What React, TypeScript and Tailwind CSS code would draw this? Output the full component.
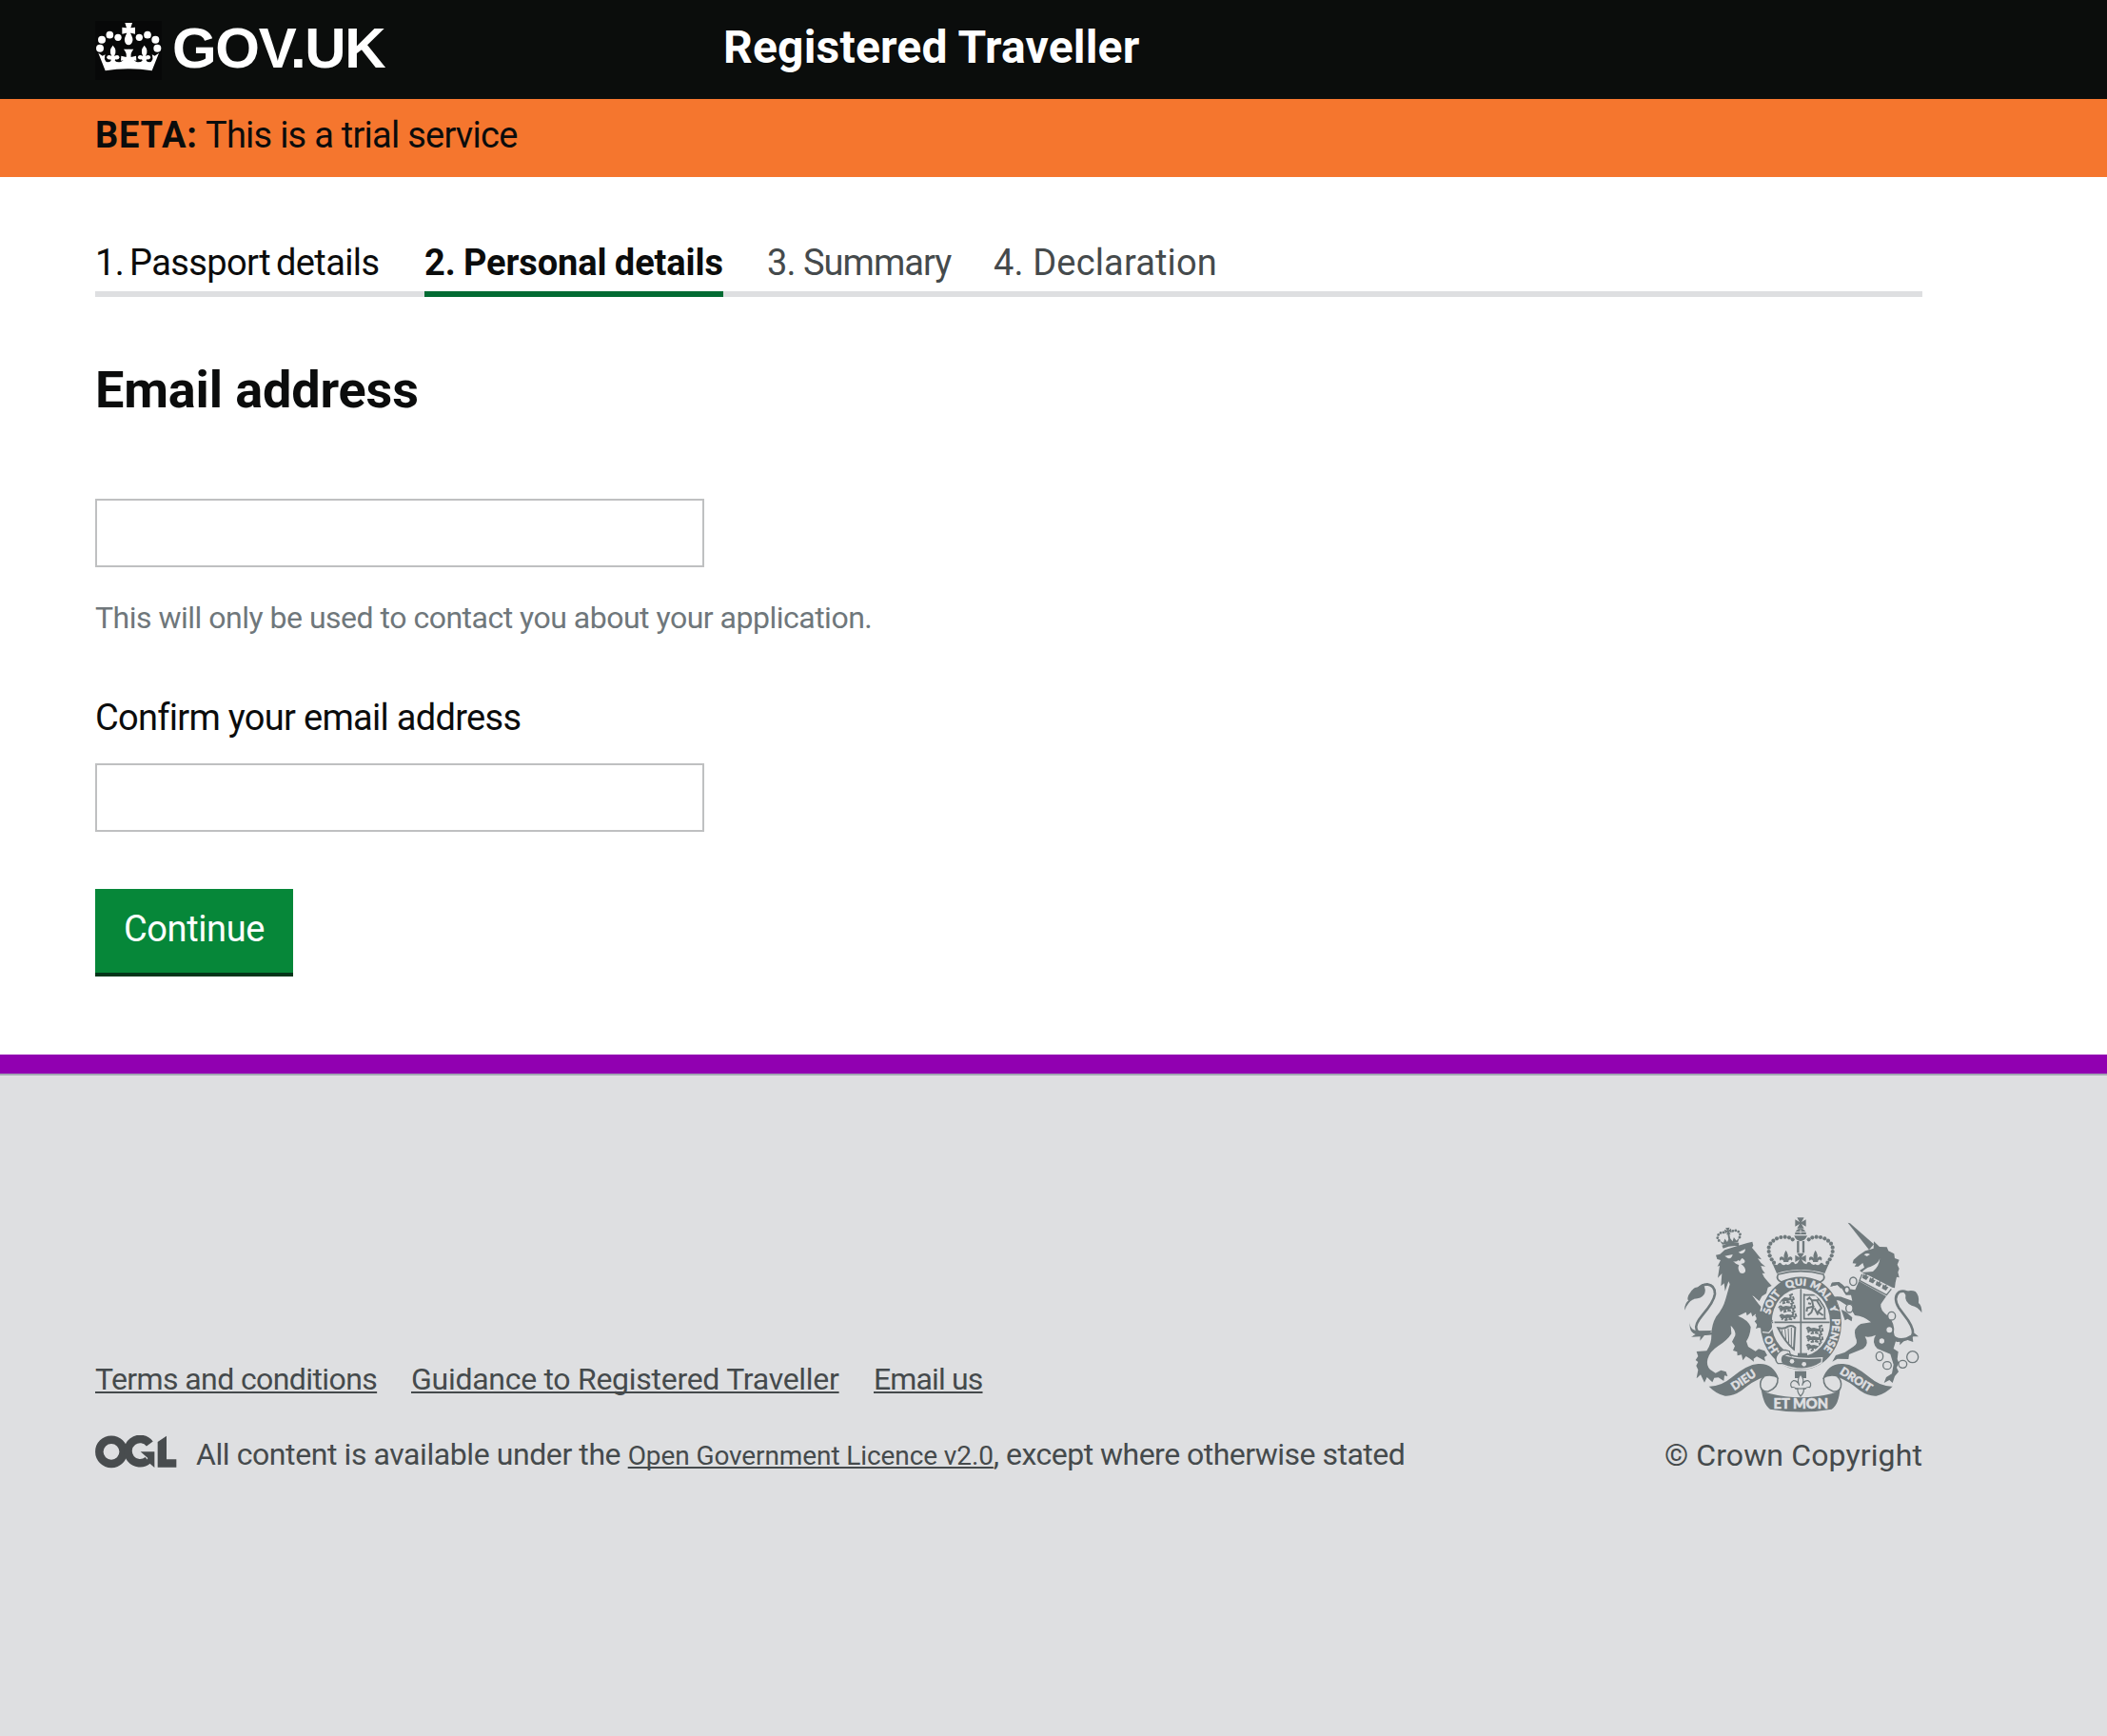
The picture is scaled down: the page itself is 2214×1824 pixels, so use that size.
import type { ReactNode } from "react";

const INK = "#6f797c";
const PAPER = "#dedfe1";

function HeaderCrown() {
  const half = (
    <>
      <circle cx="75" cy="152" r="12" />
      <circle cx="81" cy="125" r="12" />
      <circle cx="106" cy="110" r="11.5" />
      <circle cx="132" cy="118" r="11" />
      <path d="M70 167 L83 176 L92 172 Q86 186 95 195 Q105 197 110 191 L109 187 Q99 190 96 181 Q99 171 108 175 L112 177 Q101 160 116 143 Q131 160 120 177 L125 175 Q134 171 137 181 Q134 190 124 187 L122 191 Q129 198 141 195 L149 190 L141 191 L142 176 L158 180 Q160 166 150 155 H166 V217 Q126 217 92 223 Z" />
    </>
  );
  return (
    <svg className="h-[62px] w-[70px] bg-[#070808]" viewBox="60 66 210 186" fill="#fff">
      {half}
      <g transform="translate(331 0) scale(-1 1)">{half}</g>
      <path d="M154 72 H177 L172 88 H173 L186 86 V107 L173 104 H171 Q180 120 178 129 Q174 142 165.500 142 Q156 142 153 129 Q151 120 160 104 H158 L145 107 V86 L158 88 H159 Z" />
    </svg>
  );
}

function OglLogo() {
  return (
    <svg className="h-[35px] w-[86px]" viewBox="60 322 258 105">
      <circle cx="111" cy="374" r="38" fill="none" stroke="#484c4e" strokeWidth="25.500" />
      <path d="M232 349 A38 38 0 1 0 226 401" fill="none" stroke="#484c4e" strokeWidth="25.500" />
      <path d="M203 374 H247 V424 L222 402 L226 394 Z M257 343 L285 324 V398 H316 V423 H257 Z" fill="#484c4e" />
    </svg>
  );
}

function Fleur({ x, y }: { x: number; y: number }) {
  return (
    <g transform={`translate(${x} ${y})`}>
      <path d="M0 -24 Q11 -8 4 6 Q7 -4 15 -4 Q24 0 18 9 Q15 4 11 6 Q6 9 8 13 H-8 Q-6 9 -11 6 Q-15 4 -18 9 Q-24 0 -15 -4 Q-7 -4 -4 6 Q-11 -8 0 -24 Z" />
    </g>
  );
}

function Pattee({ x, y, s = 1 }: { x: number; y: number; s?: number }) {
  return (
    <path
      transform={`translate(${x} ${y}) scale(${s})`}
      d="M-11 -17 H11 L3 -3 L17 -11 V11 L3 3 L11 17 H-11 L-3 3 L-17 11 V-11 L-3 -3 Z"
    />
  );
}

const beads: [number, number][] = [
  [461, 128], [450, 122], [437, 120], [424, 121], [411, 125], [400, 132],
  [391, 141], [386, 153], [386, 166], [389, 179], [395, 191], [402, 201],
];

function CentreCrown() {
  const half = (
    <>
      {beads.map(([x, y]) => <circle key={`${x}-${y}`} cx={x} cy={y} r="6.200" />)}
      <Fleur x={440} y={186} />
      <path d="M398 205 L412 209 Q420 196 426 205 Q432 212 440 206 Q450 212 457 200 Q466 196 468 206 L487 200 V224 Q448 222 411 235 Z" />
    </>
  );
  return (
    <g>
      {half}
      <g transform="translate(973 0) scale(-1 1)">{half}</g>
      <Pattee x={486} y={76} />
      <path d="M468 112 Q470 94 486 93 Q502 94 504 112 Z" />
      <path d="M466 116 H507 Q500 133 486 133 Q472 133 466 116 Z" />
      <path d="M478 133 V170 M495 133 V170" stroke={INK} strokeWidth="7" />
      <Pattee x={486} y={188} />
      <path d="M486 96 V110 M470 104 H502" stroke={PAPER} strokeWidth="2.500" />
      <path d="M415 238 Q486 218 558 238 Q566 254 548 262 Q486 234 425 262 Q407 254 415 238 Z" fill={PAPER} stroke={INK} strokeWidth="5" />
    </g>
  );
}

function Lion() {
  return (
    <g>
      <g transform="rotate(-9 262 130)">
        <path d="M236 143 Q262 134 290 143 L288 153 Q262 145 238 153 Z" />
        <path d="M232 128 L238 141 H287 L293 128 L283 135 L277 123 L271 135 L263 121 L254 135 L248 123 L242 135 Z" />
        {[[229, 126], [226, 117], [230, 108], [238, 103], [247, 103], [277, 103], [286, 103], [294, 108], [298, 117], [295, 126]].map(([x, y]) => (
          <circle key={x} cx={x} cy={y} r="4.300" />
        ))}
        <Pattee x={262} y={101} s={0.62} />
        <path d="M259 105 H265 V126 H259 Z" />
      </g>
      <path d="M219 177 L232 174 L247 161 Q285 148 318 139 L334 135 L337 147 L333 154 Q345 168 363 191 L351 188 Q360 204 375 213 L361 211 Q364 225 374 235 L365 234 Q370 248 382 260 L395 274 L383 279 L378 298 L364 307 L356 322 L336 306 Q352 332 369 347 L386 361 L393 377 L399 384 L390 391 L393 405 L384 404 L382 418 L371 409 L366 414 L356 405 L345 409 L349 396 L341 386 L351 377 L343 369 L346 362 L334 371 L330 358 L317 368 L314 357 L289 369 Q322 382 329 404 Q327 432 315 449 L321 466 L344 480 L354 473 L373 479 L381 493 L372 499 L375 512 L358 502 L348 497 L338 504 L339 513 L324 502 L314 496 L304 509 L300 491 L287 494 L286 482 L273 478 L279 464 L270 450 L280 431 Q283 415 266 399 L268 425 Q255 446 226 464 Q199 482 193 505 Q188 525 201 538 L218 549 L235 540 L251 545 L256 559 L246 557 L244 574 L227 563 L214 564 L208 578 L191 562 L183 579 L171 554 L158 566 L163 539 L157 526 L163 514 L155 508 L163 496 L158 481 L190 479 Q206 455 205 429 Q205 397 220 371 Q242 345 250 315 L263 269 L259 260 L248 291 L245 266 L235 275 L238 235 L225 249 L231 210 L224 213 L234 193 L223 190 Z" />
      <path d="M208 424 Q166 432 158 412 Q151 397 177 366 Q213 324 216 300 Q217 272 192 269 Q173 270 160 287" fill="none" stroke={INK} strokeWidth="8" />
      <path d="M121 351 Q119 332 133 320 Q127 318 133 303 Q145 279 163 278 L177 268 Q191 283 182 301 Q173 315 151 315 Q130 325 121 351 Z" />
      <path d="M138 386 Q134 409 157 416 L208 415 Q193 428 183 430 L169 447 L170 434 L141 435 L155 427 Q132 419 138 386 Z" />
      <g fill={PAPER}>
        <path d="M247 180 L272 175 Q269 190 257 187 Z M290 168 L312 158 Q312 172 298 173 Z" />
        <path d="M273 196 Q283 201 290 192 Q300 183 307 191 Q314 197 307 203 L298 205 Q314 216 312 229 Q307 238 295 233 Q286 219 292 209 L282 204 Z" />
        <path d="M284 190 L294 183 L301 187 L294 196 Z" fill={INK} />
      </g>
      <path d="M336 306 L376 349" stroke={PAPER} strokeWidth="3" />
    </g>
  );
}

function Unicorn() {
  return (
    <g>
      <path d="M635 75 L642 77 L717 143 L702 161 Z" />
      <path d="M653 192 L670 177 L690 164 L716 156 L717 134 L735 151 L758 152 L763 164 L781 173 L783 187 L797 192 L791 207 L797 220 L793 231 L797 248 L789 246 L785 264 L783 281 L775 279 L700 241 Q685 238 672 226 L687 216 L682 202 L668 213 L656 213 L662 204 L650 203 Z" />
      <path d="M714 229 Q734 213 736 188 Q731 205 706 214 Q690 218 679 232 Z" fill={PAPER} />
      <path d="M686 176 Q696 169 705 175 L695 181 Z" fill={PAPER} />
      <path d="M680 237 L672 257 L757 303 L772 284" fill={PAPER} stroke={INK} strokeWidth="4" />
      {[[690, 246], [711, 257], [732, 268], [752, 279]].map(([x, y]) => (
        <g key={x} transform={`translate(${x} ${y}) rotate(27) scale(.8)`}>
          <path d="M0 -14 L5 -5 L12 -8 L9 9 H-9 L-12 -8 L-5 -5 Z" />
        </g>
      ))}
      <path d="M670 259 L756 307 L739 332 Q735 351 764 371 Q784 394 780 421 L786 449 L779 472 L794 482 L791 505 L796 517 L789 532 L795 545 L783 559 L776 580 L766 571 L749 580 L756 562 L774 551 L779 522 L769 489 L728 472 Q708 451 723 429 Q704 438 689 434 Q704 458 684 472 L639 490 L637 505 L602 504 L586 513 L597 493 L625 484 L652 466 Q670 456 659 436 Q650 407 676 394 L708 389 Q687 370 657 367 L642 342 L607 320 L594 320 L610 347 L629 356 L649 374 L647 386 L634 378 L626 383 L618 360 L596 341 L581 316 L589 308 L615 309 L649 321 L645 303 L629 303 L615 281 L602 271 L580 276 L585 264 L607 262 L634 283 L658 287 Z" />
      <path d="M788 447 Q823 447 838 431 Q846 416 825 383 L795 342 Q777 310 796 294 Q814 285 832 302" fill="none" stroke={INK} strokeWidth="8" />
      <path d="M812 294 Q833 285 848 292 Q861 304 858 328 Q869 337 868 359 Q856 340 836 336 Q813 324 817 303 Z" />
      <path d="M776 425 Q789 445 819 437 L845 423 L858 434 L839 434 L841 451 L817 443 L799 461 L799 447 L776 451 Z" />
      <g fill={PAPER} stroke={INK} strokeWidth="4">
        <ellipse cx="652" cy="260" rx="11" ry="13" />
        <ellipse cx="632" cy="287" rx="8" ry="10" />
        <ellipse cx="640" cy="345" rx="11" ry="13" />
        <ellipse cx="773" cy="369" rx="12" ry="13" />
        <circle cx="766" cy="413" r="11" />
        <circle cx="742" cy="448" r="10" />
        <ellipse cx="735" cy="496" rx="11" ry="14" />
        <ellipse cx="759" cy="525" rx="13" ry="12" />
        <ellipse cx="808" cy="521" rx="13" ry="12" />
        <circle cx="839" cy="498" r="18" />
      </g>
    </g>
  );
}

function QuarterLions({ x, y }: { x: number; y: number }) {
  return (
    <g fill="none" stroke={INK} strokeWidth="6">
      {[0, 27, 54].map((dy) => (
        <path
          key={dy}
          transform={`translate(${x} ${y + dy})`}
          d="M0 4 Q6 -5 11 3 Q7 9 2 6 M10 5 L23 3 L37 7 Q45 3 41 -4 L50 -7 M11 7 L4 15 M18 6 L20 17 L13 18 M33 7 L29 16 L37 18 M39 8 L46 12 L43 18 M49 1 L51 12 M8 9 H38"
        />
      ))}
    </g>
  );
}

function Garter() {
  const words: [string, number][] = [["HO", 107], ["SOIT", 234], ["QUI", 327], ["MAL", 404], ["Y", 470], ["PENSE", 550]];
  return (
    <g>
      <ellipse cx="487" cy="391" rx="133" ry="153" fill={PAPER} />
      <ellipse cx="487" cy="391" rx="128" ry="148" />
      <ellipse cx="487" cy="389" rx="92" ry="107" fill={PAPER} />
      <clipPath id="shield"><ellipse cx="487" cy="389" rx="86" ry="101" /></clipPath>
      <g clipPath="url(#shield)">
        <g transform="rotate(-8 440 340)"><QuarterLions x={417} y={310} /></g>
        <QuarterLions x={505} y={406} />
        <path d="M497 299 V378 H566 M497 303 H535 L562 344 V378" fill="none" stroke={INK} strokeWidth="5" />
        <path d="M506 318 L514 311 L522 320 L537 320 L552 344 L541 356 L557 367 M522 320 L526 339 L507 344 L505 355 M528 337 L520 358 L509 367 M530 344 L541 366 M510 329 L519 331 M536 322 L545 315" fill="none" stroke={INK} strokeWidth="6" />
        <path d="M415 407 Q435 411 447 402 Q459 396 469 406 L465 474 Q438 453 415 407 Z" fill="none" stroke={INK} strokeWidth="6" />
        <path d="M427 413 L429 430 M437 411 L440 446 M447 408 L449 455 M457 406 L457 463" stroke={INK} strokeWidth="3" />
      </g>
      <path d="M487 284 V495 M396 389 H578" stroke={INK} strokeWidth="5" />
      <path d="M477 486 H507 V498 H477 Z" />
      <path id="garter-line" d="M487 509 A99 117 0 0 1 388 388 A99 117 0 0 1 487 273 A99 117 0 0 1 586 388 A99 117 0 0 1 487 509" fill="none" />
      <g fill={PAPER} stroke={PAPER} strokeWidth="1.5" fontFamily="Lato, sans-serif" fontWeight="900" fontSize="33" textAnchor="middle">
        {words.map(([word, offset]) => (
          <text key={word}><textPath href="#garter-line" startOffset={offset}>{word}</textPath></text>
        ))}
      </g>
      <path d="M414 478 Q450 510 554 501 L552 516 Q500 552 426 521 Z" stroke={PAPER} strokeWidth="4" />
      <path d="M438 476 Q421 476 412 492 Q402 508 415 519 L432 519 Q424 508 430 496 L446 488 L455 494 L451 480 Z" fill={PAPER} stroke={INK} strokeWidth="4" />
      <circle cx="459" cy="512" r="7" fill={PAPER} />
      <circle cx="497" cy="521" r="7" fill={PAPER} />
      <path d="M400 372 L402 392 L396 410 L386 422 L366 420" fill="none" stroke={PAPER} strokeWidth="4" />
      <path d="M344 352 L372 356 L388 376 L399 383 L390 392 L394 405 L383 405 L380 418 L369 409 L350 405 Z" />
    </g>
  );
}

function Ribbon() {
  const side = (
    <>
      <path d="M197 591 Q235 592 270 562 Q318 522 352 520 Q400 516 418 568 Q394 552 369 562 Q335 574 300 604 Q272 623 248 621 Q220 615 197 591 Z" />
      <path d="M371 560 Q356 572 360 592 Q364 609 384 607 Q417 594 414 565" fill="none" stroke={INK} strokeWidth="4.500" />
    </>
  );
  return (
    <g>
      {side}
      <g transform="translate(973 0) scale(-1 1)">{side}</g>
      <path d="M361 593 Q368 609 390 614 Q486 638 584 614 Q605 608 611 593 Q607 650 584 663 Q486 680 390 663 Q368 650 361 593 Z" />
      <g fill={PAPER} stroke={PAPER} strokeWidth="1.5" fontFamily="Lato, sans-serif" fontWeight="900" textAnchor="middle">
        <text x="487" y="660" fontSize="44">ET MON</text>
        <text transform="translate(313 581) rotate(-34)" fontSize="36">DIEU</text>
        <text transform="translate(655 580) rotate(32)" fontSize="36">DROIT</text>
      </g>
      <path d="M468 543 H504 V565 H468 Z" />
      <g fill={PAPER} stroke={INK} strokeWidth="3.500">
        <path d="M486 553 Q500 570 491 588 Q496 572 510 573 Q523 580 515 594 Q506 592 501 598 H496 Q498 610 486 622 Q475 610 477 598 H471 Q467 592 458 594 Q450 580 463 573 Q476 572 482 588 Q473 570 486 553 Z" />
        <path d="M469 598 H503" />
      </g>
    </g>
  );
}

function RoyalArms() {
  return (
    <svg className="h-[207px] w-[250px]" viewBox="120 55 750 621" fill={INK}>
      <Lion />
      <Unicorn />
      <Garter />
      <path d="M580 276 L585 264 L607 262 L620 272 L613 283 L602 271 Z M581 316 L589 308 L615 309 L624 320 L594 320 L610 347 L604 350 Z" />
      <CentreCrown />
      <Ribbon />
    </svg>
  );
}

function FooterLink({ children, className = "" }: { children: ReactNode; className?: string }) {
  return (
    <a href="#" className={`underline decoration-2 underline-offset-2 [text-decoration-skip-ink:none] ${className}`}>
      {children}
    </a>
  );
}

export default function App() {
  return (
    <div className="flex h-[1824px] flex-col bg-white font-['Roboto','Liberation_Sans',sans-serif] text-[38px] whitespace-nowrap text-[#0b0c0c]">
      <header className="flex h-[104px] bg-[#0b0d0c] pl-[100px] font-bold text-white">
        <div className="flex w-[660px] items-start gap-[11px]">
          <div className="pt-[22px]"><HeaderCrown /></div>
          <span className="font-['Liberation_Sans',sans-serif] text-[60px] leading-[102px] tracking-[-1.3px]">GOV.UK</span>
        </div>
        <span className="text-[48px] leading-[100px] tracking-[0.2px]">Registered Traveller</span>
      </header>

      <div className="flex h-[82px] bg-[#f5762e] pl-[100px] leading-[76px]">
        <strong className="w-[116px] tracking-[0.8px]">BETA:</strong>
        <span className="tracking-[-0.75px]">This is a trial service</span>
      </div>

      <main className="flex w-[2020px] flex-col pl-[100px]">
        <ol className="mt-[65px] flex gap-[46px] border-b-6 border-[#dedfe1] leading-[50px]">
          <li className="w-[300px] tracking-[-0.6px] [word-spacing:-3px]">1. Passport details</li>
          <li className="-mb-1.5 w-[314px] border-b-6 border-[#026b33] pb-[5px] font-bold tracking-[-0.1px] [word-spacing:-1px]">2. Personal details</li>
          <li className="w-[192px] tracking-[-0.95px]">
            <span className="text-[#454a4c]">3. Summary</span>
          </li>
          <li className="tracking-[0.15px] text-[#454a4c]">4. Declaration</li>
        </ol>

        <h1 className="mt-[68px] text-[54px] leading-[60px] font-bold tracking-[-0.15px]">Email address</h1>
        <input className="mt-[84px] h-[72px] w-[640px] border-2 border-[#bfc0c1] bg-white" />
        <p className="mt-[33px] text-[32px] leading-[40px] tracking-[-0.5px] text-[#6f777b]">
          This will only be used to contact you about your application.
        </p>
        <label className="mt-[60px] leading-[50px] tracking-[-0.7px]">Confirm your email address</label>
        <input className="mt-[23px] h-[72px] w-[640px] border-2 border-[#bfc0c1] bg-white" />
        <button className="mt-[60px] h-[92px] w-[208px] border-b-4 border-[#033619] bg-[#068739] pb-1 leading-[84px] tracking-[-0.4px] text-white">
          Continue
        </button>
      </main>

      <footer className="mt-[82px] h-[716px] border-t-20 border-[#9100b1]">
        <div className="flex h-[696px] items-start justify-between border-t-2 border-[#a2a9b2] bg-[#dedfe1] pr-[194px] pl-[100px] text-[32px] leading-[40px] text-[#454a4c]">
          <div className="pt-[299px]">
            <div className="flex gap-9">
              <FooterLink className="w-[296px] tracking-[-0.6px]">Terms and conditions</FooterLink>
              <FooterLink className="w-[450px] tracking-[-0.28px]">Guidance to Registered Traveller</FooterLink>
              <FooterLink className="tracking-[-0.85px]">Email us</FooterLink>
            </div>
            <div className="mt-[39px] flex items-start gap-5 tracking-[-0.42px]">
              <OglLogo />
              <p>
                All content is available under the{" "}
                <FooterLink className="text-[28px] tracking-[-0.1px]">Open Government Licence v2.0</FooterLink>
                <span className="tracking-[-0.52px]">, except where otherwise stated</span>
              </p>
            </div>
          </div>
          <div className="flex flex-col items-end pt-[148px]">
            <RoyalArms />
            <span className="mt-6 tracking-[0.12px]">© Crown Copyright</span>
          </div>
        </div>
      </footer>
    </div>
  );
}
